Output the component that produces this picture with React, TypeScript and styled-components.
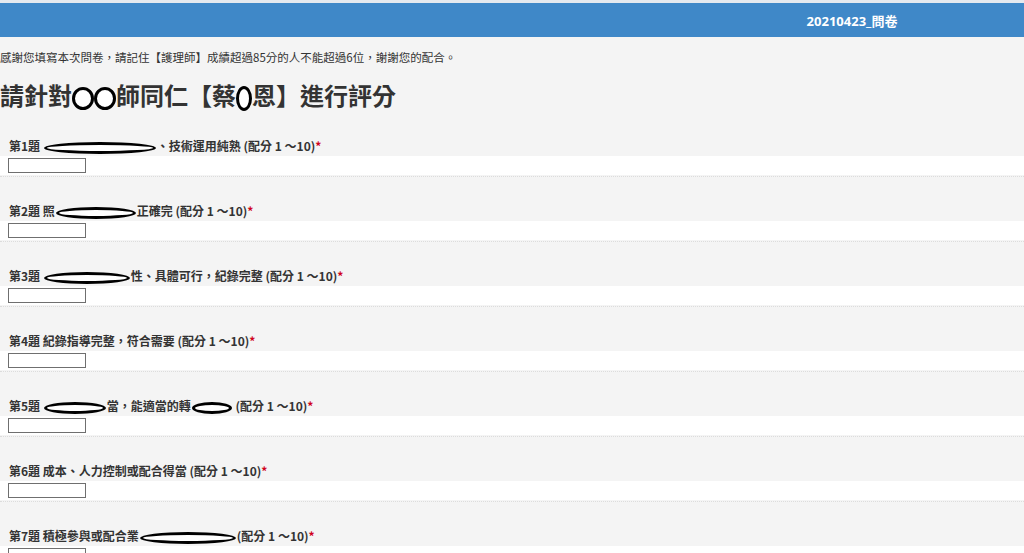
import React from "react";
import styled, { createGlobalStyle } from "styled-components";

const GlobalStyle = createGlobalStyle`
  html, body {
    margin: 0;
    padding: 0;
    background: #f4f4f4;
    font-family: "Noto Sans CJK TC", "Noto Sans", sans-serif;
    color: #333;
  }
`;

type Part = string | { blot: number };

const questions: Part[][] = [
  ["第1題 ", { blot: 112 }, "、技術運用純熟  (配分 1 ～10)"],
  ["第2題 照", { blot: 80 }, "正確完 (配分 1 ～10)"],
  ["第3題 ", { blot: 86 }, "性、具體可行，紀錄完整 (配分 1 ～10)"],
  ["第4題 紀錄指導完整，符合需要 (配分 1 ～10)"],
  ["第5題 ", { blot: 62 }, "當，能適當的轉", { blot: 40 }, " (配分 1 ～10)"],
  ["第6題 成本、人力控制或配合得當 (配分 1 ～10)"],
  ["第7題 積極參與或配合業", { blot: 96 }, "(配分 1 ～10)"],
];

export default function App() {
  return (
    <Page>
      <GlobalStyle />
      <TopStrip />
      <Bar>
        <BarTitle>20210423_問卷</BarTitle>
      </Bar>
      <Intro>
        感謝您填寫本次問卷，請記住【護理師】成績超過85分的人不能超過6位，謝謝您的配合。
      </Intro>
      <Heading>
        請針對<Blot $w={22} $h={23} $gap={0} />
        <Blot $w={22} $h={23} $gap={0} />師同仁【蔡<Blot $w={16} $h={25} $gap={0} />恩】進行評分
      </Heading>
      {questions.map((parts, i) => (
        <Question key={i}>
          <Label>
            {parts.map((p, j) =>
              typeof p === "string" ? (
                <React.Fragment key={j}>{p}</React.Fragment>
              ) : (
                <Blot key={j} $w={p.blot} $h={12} $gap={1} />
              )
            )}
            <Star>*</Star>
          </Label>
          <InputRow>
            <ScoreInput type="text" />
          </InputRow>
          <Divider />
        </Question>
      ))}
    </Page>
  );
}

const Page = styled.div`
  width: 1024px;
  height: 553px;
  overflow: hidden;
`;

const TopStrip = styled.div`
  height: 3px;
  background: #e4e9ef;
`;

const Bar = styled.div`
  height: 34px;
  background: #3f88c8;
  display: flex;
  justify-content: flex-end;
  align-items: center;
`;

const BarTitle = styled.div`
  width: 344px;
  text-align: center;
  color: #fff;
  font-weight: bold;
  font-size: 13px;
  font-family: "Open Sans", "Noto Sans CJK TC", sans-serif;
`;

const Intro = styled.div`
  margin-top: 12px;
  font-size: 11.5px;
  line-height: 16px;
  white-space: nowrap;
`;

const Heading = styled.h1`
  margin: 15px 0 28px;
  font-size: 24px;
  line-height: 30px;
  font-weight: bold;
  color: #333;
  white-space: nowrap;
`;

const Blot = styled.span<{ $w: number; $h: number; $gap: number }>`
  display: inline-block;
  box-sizing: border-box;
  width: ${(p) => p.$w}px;
  height: ${(p) => p.$h}px;
  border: 3px solid #000;
  border-radius: 50%;
  background: #fff;
  vertical-align: middle;
  margin: 0 ${(p) => p.$gap}px;
`;

const Question = styled.div``;

const Label = styled.div`
  height: 14px;
  padding: 0 0 3px 9px;
  font-size: 12px;
  line-height: 14px;
  font-weight: bold;
  color: #333;
  white-space: nowrap;
`;

const Star = styled.span`
  color: #d0021b;
`;

const InputRow = styled.div`
  height: 19px;
  background: #fff;
  display: flex;
  align-items: center;
  padding-left: 8px;
`;

const ScoreInput = styled.input`
  box-sizing: border-box;
  width: 78px;
  height: 15px;
  margin: 0;
  padding: 0;
  border: 1px solid #6f6f6f;
  background: #fff;
`;

const Divider = styled.div`
  margin: 1px 0 27px;
  border-top: 1px dotted #dcdcdc;
`;
